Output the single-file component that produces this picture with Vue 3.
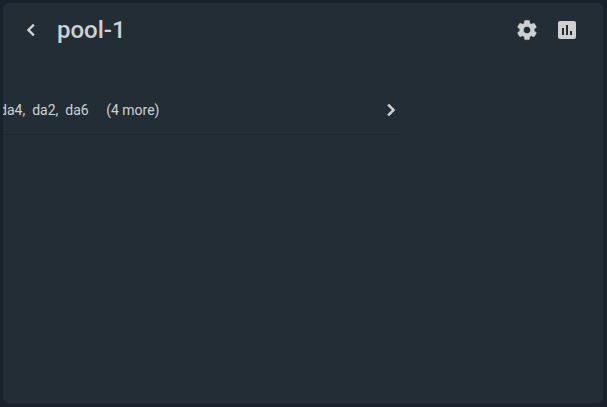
<script setup>
const disks = ['da4,', 'da2,', 'da6']
</script>

<template>
  <div class="screen">
    <section class="panel">
      <header class="toolbar">
        <button class="icon back" aria-label="Back">
          <svg viewBox="0 0 24 24" width="24" height="24"><path d="M15.41 7.41 14 6l-6 6 6 6 1.41-1.41L10.83 12z" /></svg>
        </button>
        <h1 class="title">pool-1</h1>
        <div class="actions">
          <button class="icon bold" aria-label="Settings">
            <svg viewBox="0 0 24 24" width="24" height="24"><path d="M19.14 12.94c.04-.3.06-.61.06-.94 0-.32-.02-.64-.07-.94l2.03-1.58a.49.49 0 0 0 .12-.61l-1.92-3.32a.49.49 0 0 0-.59-.22l-2.39.96c-.5-.38-1.03-.7-1.62-.94l-.36-2.54a.48.48 0 0 0-.48-.41h-3.84c-.24 0-.43.17-.47.41l-.36 2.54c-.59.24-1.13.57-1.62.94l-2.39-.96a.48.48 0 0 0-.59.22L2.74 8.87c-.12.21-.08.47.12.61l2.03 1.58c-.05.3-.09.63-.09.94s.02.64.07.94l-2.03 1.58a.49.49 0 0 0-.12.61l1.92 3.32c.12.22.37.29.59.22l2.39-.96c.5.38 1.03.7 1.62.94l.36 2.54c.05.24.24.41.48.41h3.84c.24 0 .44-.17.47-.41l.36-2.54c.59-.24 1.13-.56 1.62-.94l2.39.96c.22.08.47 0 .59-.22l1.92-3.32c.12-.22.07-.47-.12-.61l-2.01-1.58zM12 15.6c-1.98 0-3.6-1.62-3.6-3.6s1.62-3.6 3.6-3.6 3.6 1.62 3.6 3.6-1.62 3.6-3.6 3.6z" /></svg>
          </button>
          <button class="icon" aria-label="Statistics">
            <svg viewBox="0 0 24 24" width="24" height="24"><path d="M19 3H5c-1.1 0-2 .9-2 2v14c0 1.1.9 2 2 2h14c1.1 0 2-.9 2-2V5c0-1.1-.9-2-2-2zM9 17H7v-7h2v7zm4 0h-2V7h2v10zm4 0h-2v-4h2v4z" /></svg>
          </button>
        </div>
      </header>
      <div class="row">
        <div class="disks">
          <span v-for="d in disks" :key="d" class="disk">{{ d }}</span>
          <span class="more">(4 more)</span>
        </div>
        <svg class="chevron" viewBox="0 0 24 24" width="24" height="24"><path d="M10 6 8.59 7.41 13.17 12l-4.58 4.59L10 18l6-6z" /></svg>
      </div>
    </section>
  </div>
</template>

<style scoped>
.screen {
  box-sizing: border-box;
  width: 607px;
  height: 407px;
  padding: 3px 4px 4px 3px;
  background: #19222c;
  font-family: Roboto, "Liberation Sans", sans-serif;
}
.panel {
  height: 400px;
  border-radius: 6px;
  background: #222d36;
  overflow: hidden;
  color: #cfd0d1;
}
.toolbar {
  display: flex;
  align-items: center;
  height: 54px;
  padding: 0 24px 0 16px;
}
.icon {
  display: flex;
  width: 24px;
  height: 24px;
  padding: 0;
  border: 0;
  background: none;
}
.icon svg, .chevron { fill: #cfd0d1; }
.back svg, .bold svg { stroke: #cfd0d1; stroke-width: 0.5; }
.title {
  margin: 0 0 0 14px;
  font-size: 24px;
  font-weight: 500;
  line-height: 32px;
}
.actions {
  display: flex;
  gap: 16px;
  margin-left: auto;
}
.row {
  box-sizing: border-box;
  display: flex;
  align-items: center;
  justify-content: space-between;
  width: 397px;
  height: 47px;
  margin-top: 31px;
  padding-bottom: 2px;
  border-bottom: 1px solid #1d262e;
}
.disks {
  display: flex;
  margin-left: -4px;
  font-size: 14px;
  line-height: 20px;
}
.disk { margin-right: 7px; }
.more { margin-left: 10.5px; }
.chevron { margin-right: -3px; stroke: #cfd0d1; stroke-width: 0.6; }
</style>
